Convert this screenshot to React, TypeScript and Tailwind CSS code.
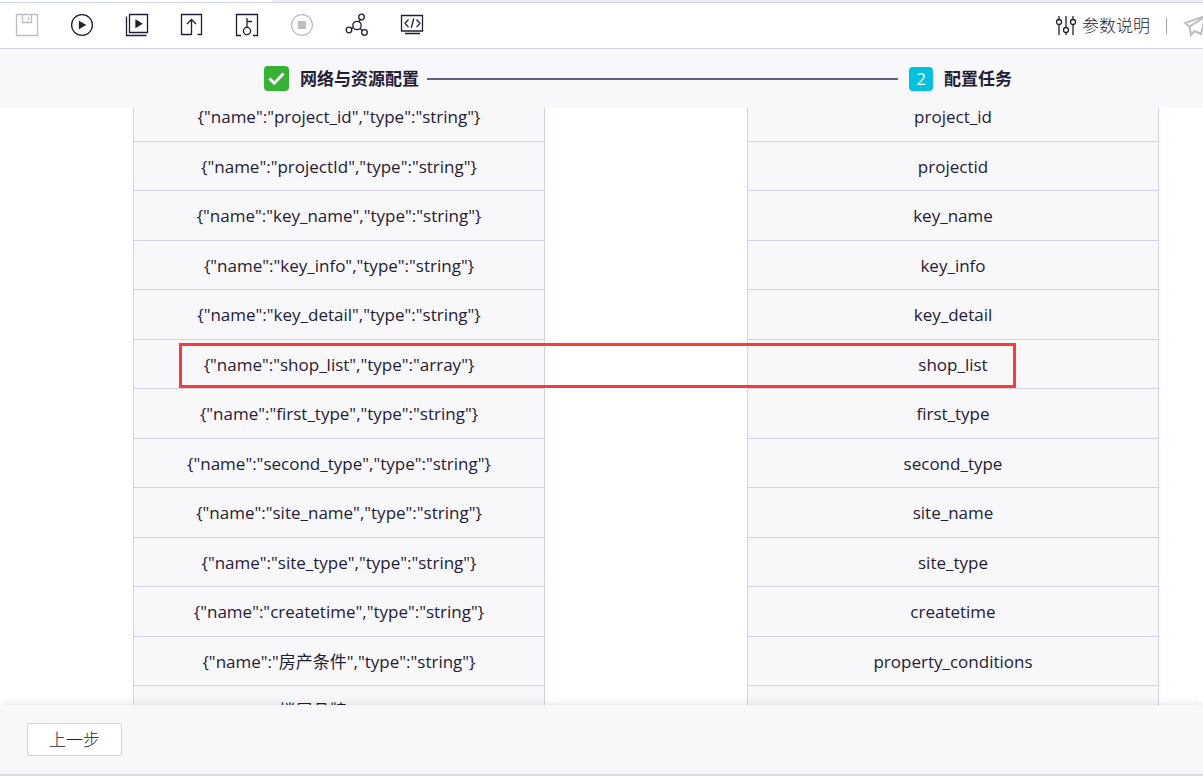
import * as React from "react";

type FieldMapping = {
  source: string;
  type: string;
  target: string;
};

const mappings: FieldMapping[] = [
  { source: "project_id", type: "string", target: "project_id" },
  { source: "projectId", type: "string", target: "projectid" },
  { source: "key_name", type: "string", target: "key_name" },
  { source: "key_info", type: "string", target: "key_info" },
  { source: "key_detail", type: "string", target: "key_detail" },
  { source: "shop_list", type: "array", target: "shop_list" },
  { source: "first_type", type: "string", target: "first_type" },
  { source: "second_type", type: "string", target: "second_type" },
  { source: "site_name", type: "string", target: "site_name" },
  { source: "site_type", type: "string", target: "site_type" },
  { source: "createtime", type: "string", target: "createtime" },
  { source: "房产条件", type: "string", target: "property_conditions" },
  { source: "楼层品牌", type: "string", target: "brand_of_area" },
];

function Icon({ children }: { children: React.ReactNode }) {
  return (
    <svg
      width="24"
      height="24"
      viewBox="0 0 24 24"
      fill="none"
      stroke="currentColor"
      strokeWidth="1.3"
      aria-hidden="true"
    >
      {children}
    </svg>
  );
}

function ToolButton({
  label,
  disabled,
  children,
}: {
  label: string;
  disabled?: boolean;
  children: React.ReactNode;
}) {
  return (
    <button
      type="button"
      aria-label={label}
      disabled={disabled}
      className="size-6 text-[#1f2035] disabled:text-[#bcbec4]"
    >
      <Icon>{children}</Icon>
    </button>
  );
}

function Toolbar() {
  return (
    <header className="flex h-[47px] shrink-0 items-center justify-between border-y border-[#ced3e8] bg-white">
      <div className="flex items-center gap-[31px] pb-px pl-[15px]">
        <ToolButton label="保存" disabled>
          <path d="M1.5 1.5h21v21h-21zM7.5 1.5v8h9v-8M13.5 4v3.5" />
        </ToolButton>
        <ToolButton label="运行">
          <circle cx="12" cy="12" r="10.4" />
          <path d="M9.5 8.9l5.5 3.1-5.5 3.1z" fill="currentColor" />
        </ToolButton>
        <ToolButton label="高级运行">
          <path d="M4.5 1.5h18v18h-18z" />
          <path d="M1.5 3.5v19h20" />
          <path d="M11 7.3l5.5 3.4-5.5 3.4z" fill="currentColor" />
        </ToolButton>
        <ToolButton label="提交">
          <path d="M11.5 21.5h-10v-20h20v20h-4M11.5 22V6.5M7 11l4.5-4.5L16 11" />
        </ToolButton>
        <ToolButton label="解锁">
          <path d="M6 22.5H1.5v-21h21v21H18M12 5v9.5M12 8.5h5" />
          <circle cx="12" cy="18" r="3.6" />
        </ToolButton>
        <ToolButton label="停止" disabled>
          <circle cx="12" cy="12" r="10.4" />
          <path d="M8 8h8v8H8z" fill="currentColor" stroke="none" />
        </ToolButton>
        <ToolButton label="血缘">
          <circle cx="12" cy="12.5" r="4.2" />
          <circle cx="16.5" cy="4" r="2.8" />
          <circle cx="4" cy="17" r="2.8" />
          <circle cx="19.5" cy="19.5" r="2.8" />
          <path d="M14 9l1.2-2.4M8.2 14.5l-1.7 1M15 15.5l2.300 2.100" />
        </ToolButton>
        <ToolButton label="脚本">
          <path d="M1.5 2.5h21v15.500h-21zM5 20.500h15M8.500 6.500L5 10.300l3.500 3.800M16.500 6.500l3.500 3.800-3.500 3.800M13.800 5.500l-2.600 9.500" />
        </ToolButton>
      </div>

      <div className="flex items-center overflow-hidden">
        <button
          type="button"
          className="flex items-center gap-1 whitespace-nowrap text-[#1f2035]"
        >
          <Icon>
            <path d="M5 2v3.500M5 10.500V21M12 2v11.500M12 18.500V21M19 2v3.500M19 10.500V21" />
            <circle cx="5" cy="8" r="2.500" />
            <circle cx="12" cy="16" r="2.500" />
            <circle cx="19" cy="8" r="2.500" />
          </Icon>
          参数说明
        </button>
        <span className="mx-4 h-4 w-px bg-[#9fa3b8]" />
        <button
          type="button"
          aria-label="发布"
          disabled
          className="-mr-1 size-6 text-[#bcbec4]"
        >
          <svg
            width="24"
            height="24"
            viewBox="0 0 24 24"
            fill="none"
            stroke="currentColor"
            strokeWidth="2"
            aria-hidden="true"
          >
            <path d="M22 2L2 9l4.500 3.500L20 4M6.500 12.500L8 21l3.500-4L18 20l4-18" />
          </svg>
        </button>
      </div>
    </header>
  );
}

function Steps() {
  return (
    <ol className="flex h-[59px] shrink-0 items-center bg-[#f8f8fb] pr-[191px] pl-[264px] font-bold">
      <li className="flex flex-1 items-center">
        <span className="flex size-[25px] items-center justify-center rounded bg-[#36b334] text-white">
          <svg
            width="19"
            height="19"
            viewBox="0 0 19 19"
            fill="none"
            stroke="currentColor"
            strokeWidth="3"
            aria-hidden="true"
          >
            <path d="M2.500 9.500l4.700 4.700L16.500 4.500" />
          </svg>
        </span>
        <span className="ml-[11px] whitespace-nowrap">网络与资源配置</span>
        <span className="mx-2 mr-[11px] h-[2px] flex-1 bg-[#5d5d7c]" />
      </li>
      <li className="flex items-center">
        <span className="flex size-6 items-center justify-center rounded bg-[#00c1de] font-normal text-white">
          2
        </span>
        <span className="ml-[11px] whitespace-nowrap">配置任务</span>
      </li>
    </ol>
  );
}

function FieldTable({ label, fields }: { label: string; fields: string[] }) {
  return (
    <table
      aria-label={label}
      className="min-w-0 flex-1 border-separate border-spacing-0 border-x border-[#ced3e8] bg-[#f8f8fb] text-center font-normal"
    >
      <tbody className="block">
        {fields.map((field) => (
          <tr
            key={field}
            className="flex h-[50px] items-center justify-center border-b border-[#ced3e8] even:h-[49px] even:pt-px"
          >
            <td className="whitespace-nowrap">{field}</td>
          </tr>
        ))}
      </tbody>
    </table>
  );
}

export default function TaskConfig() {
  return (
    <div className="flex h-screen flex-col overflow-hidden bg-white font-['Open_Sans','Noto_Sans_CJK_SC',sans-serif] text-[17px] leading-6 font-light text-[#1f2035]">
      <div className="flex h-[2px] shrink-0">
        <div className="w-[273px] bg-white" />
        <div className="flex-1 bg-[#eaeef7]" />
      </div>
      <Toolbar />
      <Steps />

      {/* 字段映射 */}
      <main className="min-h-0 flex-1 overflow-hidden">
        <div className="relative -mt-4 flex items-start gap-[202px] pr-11 pl-[133px]">
          <FieldTable
            label="来源字段"
            fields={mappings.map(
              (m) => `{"name":"${m.source}","type":"${m.type}"}`
            )}
          />
          <FieldTable
            label="目标字段"
            fields={mappings.map((m) => m.target)}
          />
          <div className="absolute top-[251px] right-[187px] left-[179px] h-[45px] border-3 border-[#f93a3a]" />
        </div>
      </main>

      <footer className="relative flex h-[71px] shrink-0 items-center border-b-2 border-[#dcdcdc] bg-[#f8f8fb] px-[27px] shadow-[0_0_8px_rgba(0,0,0,0.15)]">
        <button
          type="button"
          className="h-[33px] w-[95px] rounded-xs border border-[#ced3e8] bg-white"
        >
          上一步
        </button>
      </footer>
    </div>
  );
}
